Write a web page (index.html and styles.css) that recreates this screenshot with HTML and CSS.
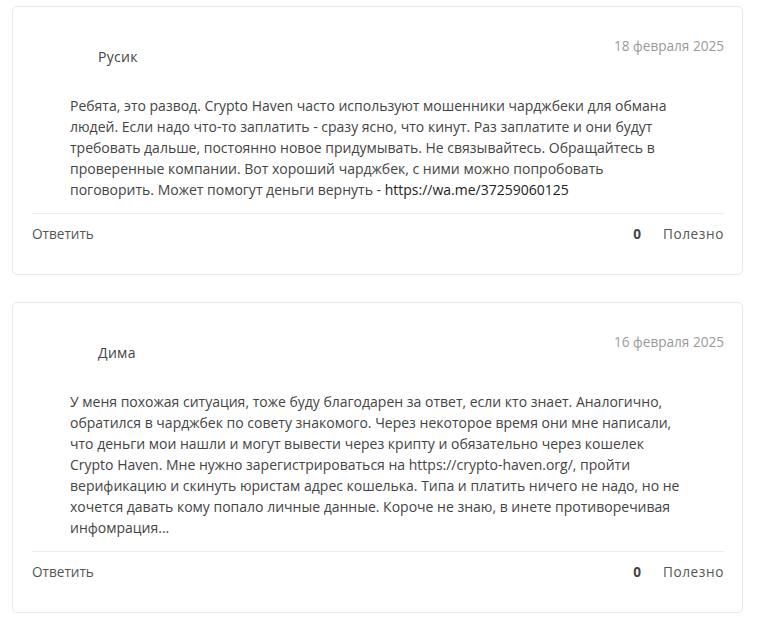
FILE: index.html
```html
<!DOCTYPE html>
<html lang="ru">
<head>
<meta charset="utf-8">
<link rel="stylesheet" href="styles.css">
</head>
<body>
<div class="list">
  <div class="card">
    <div class="head">
      <div class="author">Русик</div>
      <div class="date">18 февраля 2025</div>
    </div>
    <div class="text">Ребята, это развод. Crypto Haven часто используют мошенники чарджбеки для обмана людей. Если надо что-то заплатить - сразу ясно, что кинут. Раз заплатите и они будут требовать дальше, постоянно новое придумывать. Не связывайтесь. Обращайтесь в проверенные компании. Вот хороший чарджбек, с ними можно попробовать поговорить. Может помогут деньги вернуть - <a class="link" href="#">https://wa.me/37259060125</a></div>
    <div class="foot">
      <span class="reply">Ответить</span>
      <span class="votes"><b class="count">0</b><span class="useful">Полезно</span></span>
    </div>
  </div>
  <div class="card">
    <div class="head">
      <div class="author">Дима</div>
      <div class="date">16 февраля 2025</div>
    </div>
    <div class="text">У меня похожая ситуация, тоже буду благодарен за ответ, если кто знает. Аналогично, обратился в чарджбек по совету знакомого. Через некоторое время они мне написали, что деньги мои нашли и могут вывести через крипту и обязательно через кошелек Crypto Haven. Мне нужно зарегистрироваться на https://crypto-haven.org/, пройти верификацию и скинуть юристам адрес кошелька. Типа и платить ничего не надо, но не хочется давать кому попало личные данные. Короче не знаю, в инете противоречивая инфомрация...</div>
    <div class="foot">
      <span class="reply">Ответить</span>
      <span class="votes"><b class="count">0</b><span class="useful">Полезно</span></span>
    </div>
  </div>
</div>
</body>
</html>
```
FILE: styles.css
```css
html, body {
  margin: 0;
  padding: 0;
  background: #fff;
}
body {
  font-family: "Open Sans", "Noto Sans", sans-serif;
  color: #444;
}
.list {
  display: flex;
  flex-direction: column;
  gap: 27px;
  width: 731px;
  margin: 6px 0 0 12px;
}
.card {
  border: 1px solid #e8e8e8;
  border-radius: 5px;
  padding: 0 18px 0 19px;
}
.head {
  display: flex;
  justify-content: space-between;
  align-items: flex-start;
  padding-top: 30px;
}
.author {
  font-size: 14px;
  line-height: 18px;
  letter-spacing: 0.3px;
  color: #444;
  margin-top: 11px;
  padding-left: 66px;
}
.date {
  font-size: 13.6px;
  line-height: 18px;
  color: #9a9a9a;
}
.text {
  margin-top: 29px;
  padding: 0 38px;
  font-size: 14px;
  line-height: 21px;
  color: #444;
}
.link {
  color: #222;
  text-decoration: none;
}
.foot {
  display: flex;
  justify-content: space-between;
  align-items: center;
  margin-top: 13px;
  border-top: 1px solid #ececec;
  padding: 11px 0 31px;
  font-size: 13.6px;
  line-height: 18px;
}
.reply {
  color: #555;
}
.votes {
  display: flex;
  gap: 22px;
}
.count {
  font-weight: 700;
  color: #444;
}
.useful {
  color: #555;
  letter-spacing: 0.6px;
}
```
